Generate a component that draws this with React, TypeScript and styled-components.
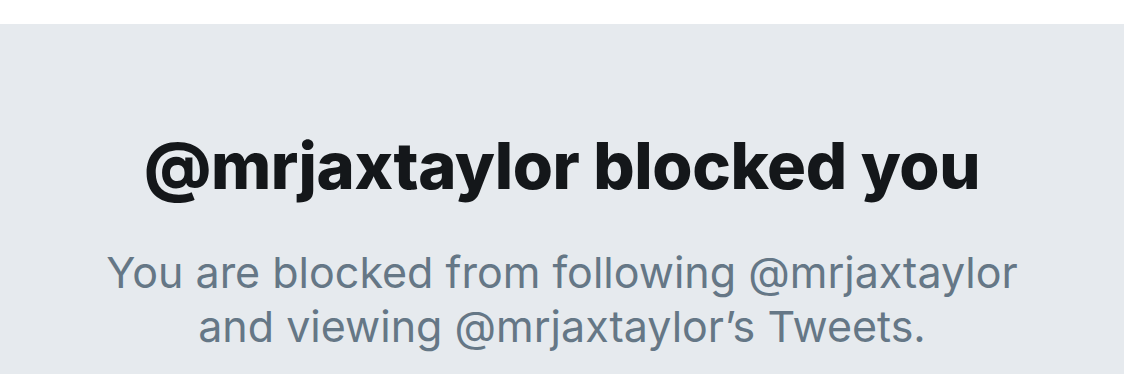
import { FC } from 'react';
import styled, { createGlobalStyle } from 'styled-components';

const GlobalStyle = createGlobalStyle`
  html, body {
    margin: 0;
    padding: 0;
    background: #ffffff;
  }
  body {
    font-family: Inter, "Noto Sans", sans-serif;
  }
`;

const TopStrip = styled.div`
  height: 24px;
  background: #ffffff;
`;

const Panel = styled.div`
  height: 350px;
  background: #e6eaee;
  display: flex;
  flex-direction: column;
  align-items: center;
  padding-top: 106px;
  box-sizing: border-box;
`;

const Title = styled.h1`
  margin: 0;
  font-size: 65px;
  line-height: 72px;
  font-weight: 800;
  color: #14171a;
  letter-spacing: -0.4px;
  white-space: nowrap;
`;

const Message = styled.p`
  margin: 43px 0 0;
  font-size: 43px;
  line-height: 54px;
  font-weight: 400;
  color: #657786;
  text-align: center;
  white-space: nowrap;
`;

const App: FC = () => (
  <>
    <GlobalStyle />
    <TopStrip />
    <Panel>
      <Title>@mrjaxtaylor blocked you</Title>
      <Message>
        You are blocked from following @mrjaxtaylor
        <br />
        and viewing @mrjaxtaylor’s Tweets.
      </Message>
    </Panel>
  </>
);

export default App;
